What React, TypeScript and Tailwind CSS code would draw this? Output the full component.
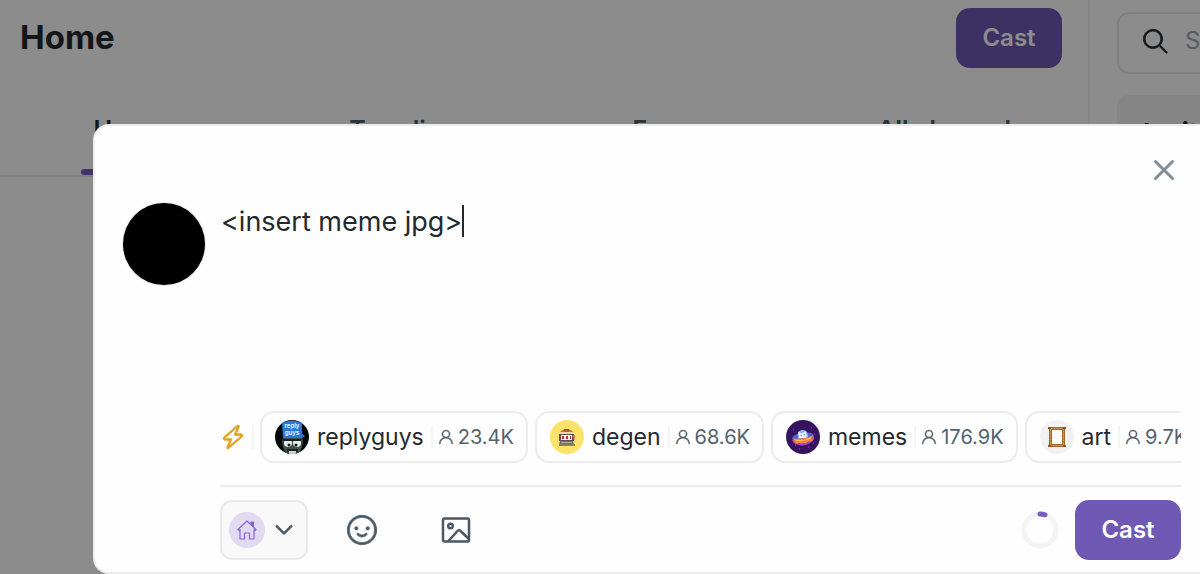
import React, { useState } from 'react';
import { GoChevronDown, GoPerson, GoSearch, GoSmiley, GoZap } from 'react-icons/go';

const ReplyGuysAvatar: React.FC = () => (
  <svg viewBox="0 0 34 34" className="size-[34px] rounded-full" aria-hidden="true">
    <rect width="34" height="34" fill="#050607" />
    <path d="M9 16h17l2 5-1 6-3 7H11l-3-7-1-6z" fill="#3c5148" />
    <path d="M7 3q10-5 20 0v10l3 4-4 1H8z" fill="#2878d8" />
    <text x="17" y="8" textAnchor="middle" fontSize="6" fontWeight="700" fill="#e3f1ff" fontFamily="Inter, sans-serif">reply</text>
    <text x="17" y="15" textAnchor="middle" fontSize="6" fontWeight="700" fill="#e3f1ff" fontFamily="Inter, sans-serif">guys</text>
    <circle cx="13" cy="23" r="4" fill="#e9eeee" />
    <circle cx="22" cy="23" r="4" fill="#e9eeee" />
    <circle cx="14" cy="25" r="1.5" fill="#111" />
    <circle cx="21" cy="25" r="1.5" fill="#111" />
    <path d="M8 19h18v2H8z" fill="#18221e" />
    <path d="M12 29h11v3H12z" fill="#18221e" />
    <path d="M14 31h7v3h-7z" fill="#c9d3cf" />
  </svg>
);

const DegenAvatar: React.FC = () => (
  <svg viewBox="0 0 34 34" className="size-[34px] rounded-full" aria-hidden="true">
    <rect width="34" height="34" fill="#fde26a" />
    <path d="M10 12q7-6 13 0z" fill="#c76b2e" />
    <rect x="14" y="9" width="5" height="2" fill="#8f5a35" />
    <rect x="10" y="12" width="13" height="2" fill="#f1d7a0" />
    <rect x="9" y="14" width="15" height="7" fill="#5d4b49" />
    <rect x="11" y="15" width="11" height="5" fill="#f7efe9" />
    <path d="M12 16h2v3h-2zM16 16h2v3h-2zM20 16h1v3h-1z" fill="#bd2c35" />
    <path d="M10 21h13l1 4H9z" fill="#6d6f74" />
    <rect x="11" y="22" width="11" height="1" fill="#a9adb2" />
    <rect x="9" y="24" width="16" height="2" fill="#8d7f56" />
    <path d="M24 20v-3" stroke="#777" />
    <circle cx="24" cy="16" r="1.3" fill="#e08030" />
  </svg>
);

const MemesAvatar: React.FC = () => (
  <svg viewBox="0 0 34 34" className="size-[34px] rounded-full" aria-hidden="true">
    <rect width="34" height="34" fill="#35135f" />
    <g transform="rotate(-8 17 17)">
      <ellipse cx="17" cy="19" rx="11" ry="6" fill="#d64a91" />
      <ellipse cx="17" cy="17" rx="11" ry="4.5" fill="#4a63d8" />
      <path d="M12 18q-1-8 5-8t5 8z" fill="#8fb5f2" />
      <path d="M13 18l0-7 2 2h3l2-2 1 7z" fill="#f5f3ff" />
      <path d="M15 15h1M18 15h1" stroke="#2b1b4a" />
      <path d="M7 17q10 3 20 0l-2 5q-8 3-16 0z" fill="#f5853f" />
      <path d="M9 19q8 3 16 0" stroke="#ffc35a" fill="none" />
      <path d="M11 23q6 3 12 0" stroke="#a93ad0" strokeWidth="2" fill="none" />
    </g>
    <path d="M7 10h1M25 8h1M27 23h1M9 25h1M22 27h1M13 29h1M28 14h1" stroke="#b64bc6" />
  </svg>
);

const ArtAvatar: React.FC = () => (
  <svg viewBox="0 0 34 34" className="size-[34px] rounded-full" aria-hidden="true">
    <rect width="34" height="34" fill="#f2f2f2" />
    <rect x="10.5" y="8.5" width="13" height="17" fill="#fbfbfb" stroke="#a8672a" strokeWidth="3" />
    <rect x="10.5" y="8.5" width="13" height="17" fill="none" stroke="#dba354" strokeWidth="1" strokeDasharray="2 1" />
    <path d="M8 7h3v2H8zM23 7h3v2h-3zM8 25h3v2H8zM23 25h3v2h-3z" fill="#8b5626" />
  </svg>
);

const HouseIcon: React.FC = () => (
  <svg viewBox="0 0 20 20" className="size-5" fill="none" stroke="#8a63d2" strokeWidth="1.2" strokeLinejoin="round" aria-hidden="true">
    <path d="M1 9.5 10 1l9 8.5-1 1-1-.9V19h-4.500v-6h-5v6H3V9.600l-1 .9z" />
    <path d="M14 4.500V2h2.500v5" fill="#8a63d2" />
  </svg>
);

const CloseIcon: React.FC = () => (
  <svg viewBox="0 0 24 24" className="size-6" fill="none" stroke="currentColor" strokeWidth="3" strokeLinecap="round" aria-hidden="true">
    <path d="M3.500 3.500l17 17M20.500 3.500l-17 17" />
  </svg>
);

const ImageIcon: React.FC = () => (
  <svg viewBox="0 0 32 28" className="h-7 w-8" fill="none" stroke="currentColor" strokeWidth="2.500" strokeLinejoin="round" aria-hidden="true">
    <rect x="3" y="2.500" width="26" height="23" rx="1.500" />
    <circle cx="10.500" cy="10" r="2.300" />
    <path d="M8 25.500L17.500 15q1.500-1.700 3 0L29 23" />
  </svg>
);

const channels = [
  { name: 'replyguys', followers: '23.4K', avatar: <ReplyGuysAvatar /> },
  { name: 'degen', followers: '68.6K', avatar: <DegenAvatar /> },
  { name: 'memes', followers: '176.9K', avatar: <MemesAvatar /> },
  { name: 'art', followers: '9.7K', avatar: <ArtAvatar /> },
];

const tabs = ['Home', 'Trending', 'Frames', 'All channels'];

const CastButton: React.FC = () => (
  <button type="button" className="h-[60px] w-[106px] shrink-0 rounded-[14px] bg-[#7059b5] text-2xl font-semibold text-white">
    Cast
  </button>
);

const Feed: React.FC = () => (
  <div className="flex h-full">
    <main className="min-w-0 flex-1 border-r-2 border-gray-100">
      <header className="flex items-start justify-between pt-2 pr-[26px] pl-5">
        <h1 className="text-[33px] leading-[58px] font-bold text-[#24292e]">Home</h1>
        <CastButton />
      </header>
      <nav className="mt-9 -ml-2 grid h-[73px] grid-cols-4 justify-items-center border-b-2 border-gray-200 text-[25px] font-semibold">
        {tabs.map((tab, i) => (
          <a
            key={tab}
            href="#"
            className={
              i === 0
                ? 'flex h-[71px] flex-col justify-between px-3 pt-2 text-[#24292e]'
                : 'h-[71px] px-3 pt-2 text-[#4f5b66]'
            }
          >
            {tab}
            {i === 0 && <span className="-mx-3 h-1.5 rounded-full bg-[#7c5ac0]" />}
          </a>
        ))}
      </nav>
    </main>
    <aside className="w-[110px] shrink-0 overflow-hidden pt-3 pl-[27px]">
      <label className="flex h-[62px] w-[300px] items-center gap-4 rounded-xl border-2 border-gray-200 pb-1 pl-[22px]">
        <GoSearch className="size-7 shrink-0 text-[#24292e]" stroke="currentColor" strokeWidth={0.6} />
        <input type="search" aria-label="Search" placeholder="Search" className="min-w-0 flex-1 text-2xl outline-none placeholder:text-[#9fa8b0]" />
      </label>
      <div className="mt-[21px] h-40 w-[300px] rounded-xl bg-[#f4f4f4] px-[26px] pt-[18px]">
        <h2 className="text-[26px] font-bold text-[#24292e]">Invite</h2>
      </div>
    </aside>
  </div>
);

const Composer: React.FC = () => {
  const [text, setText] = useState('<insert meme jpg>');

  return (
    <div role="dialog" aria-label="New cast" className="flex h-[450px] flex-col rounded-l-2xl border-2 border-r-0 border-[#ededed] bg-[#fefefe] pr-[19px] pb-3 pl-7">
      <div className="flex justify-end pt-8 pr-[5px]">
        <button type="button" aria-label="Close" className="text-[#7f8d97]">
          <CloseIcon />
        </button>
      </div>
      <div className="mt-[21px] flex flex-1 gap-4">
        <div className="size-[82px] shrink-0 rounded-full bg-black ring-1 ring-gray-200" />
        <div className="flex min-w-0 flex-1 pt-0.5">
          <textarea
            aria-label="Cast text"
            value={text}
            onChange={(e) => setText(e.target.value)}
            className="field-sizing-content h-[34px] resize-none overflow-hidden text-[27px] leading-[34px] text-[#24292e] outline-none"
          />
          <span className="h-8 w-0.5 bg-[#24292e]" />
        </div>
      </div>

      <div className="ml-[97px] min-w-0">
        <div className="flex items-center overflow-hidden pb-[22px]">
          <GoZap className="size-[26px] shrink-0 text-[#e0a520]" stroke="currentColor" strokeWidth={0.8} />
          <span className="mx-[6px] h-[26px] w-0.5 shrink-0 bg-gray-100" />
          <div className="flex gap-[7px]">
            {channels.map((channel) => (
              <button
                key={channel.name}
                type="button"
                className="flex h-[52px] shrink-0 items-center rounded-[14px] border-2 border-[#ececec] pr-3 pl-[13px]"
              >
                {channel.avatar}
                <span className="ml-2 text-[23px] text-[#24292e]">{channel.name}</span>
                <span className="mr-1 ml-[7px] h-[22px] w-0.5 bg-gray-100" />
                <GoPerson className="size-[18px] text-[#54626f]" stroke="currentColor" strokeWidth={0.5} />
                <span className="ml-[3px] text-xl text-[#54626f]">{channel.followers}</span>
              </button>
            ))}
          </div>
        </div>
        <div className="flex items-center border-t-2 border-[#ececec] pt-[13px]">
          <button
            type="button"
            aria-label="Choose channel"
            className="flex h-[60px] w-[88px] items-center justify-between rounded-xl border-2 border-[#e9e9e9] bg-[#f9f9f9] pr-2 pl-[7px] text-[#4a5965]"
          >
            <span className="flex size-9 items-center justify-center rounded-full bg-[#e1daf0]">
              <HouseIcon />
            </span>
            <GoChevronDown className="size-7" stroke="currentColor" strokeWidth={0.8} />
          </button>
          <button type="button" aria-label="Add emoji" className="ml-[38px] text-[#4a5965]">
            <GoSmiley className="size-8" stroke="currentColor" strokeWidth={0.6} />
          </button>
          <button type="button" aria-label="Add image" className="ml-[62px] text-[#4a5965]">
            <ImageIcon />
          </button>
          <svg viewBox="0 0 38 38" className="mr-4 ml-auto size-[38px]" fill="none" aria-hidden="true">
            <circle cx="19" cy="19" r="16" stroke="#f4f4f4" strokeWidth="5" />
            <path d="M19 3A16 16 0 0 1 24 3.800" stroke="#7c5ac0" strokeWidth="5" strokeLinecap="round" />
          </svg>
          <CastButton />
        </div>
      </div>
    </div>
  );
};

const App: React.FC = () => (
  <div className="relative h-screen overflow-hidden bg-white font-['Inter',sans-serif]">
    <Feed />
    <div className="absolute inset-0 bg-black/45 pt-[124px] pl-[93px]">
      <Composer />
    </div>
  </div>
);

export default App;
